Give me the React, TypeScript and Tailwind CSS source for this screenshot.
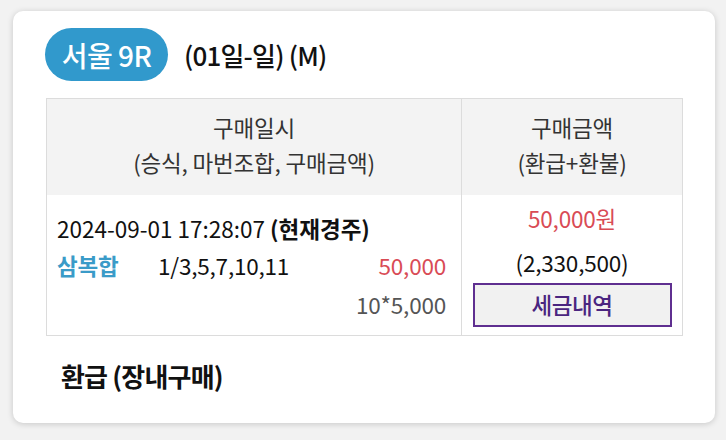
import React from "react";

const font = { fontFamily: '"Noto Sans CJK KR", "Noto Sans", sans-serif' };

export default function App() {
  return (
    <div className="w-[726px] h-[440px] bg-[#f2f2f2] pt-[11px] pl-[13px]" style={font}>
      <div className="w-[702px] h-[412px] bg-white rounded-[10px] shadow-[0_1px_6px_rgba(0,0,0,0.18)] pt-[17px] pl-[32px] pr-[32px]">
        {/* title row */}
        <div className="flex items-center">
          <span className="flex items-center justify-center w-[123px] h-[53px] rounded-full bg-[#3199cc] text-white text-[28px] font-medium tracking-[-0.5px]">
            서울 9R
          </span>
          <span className="ml-[16px] text-[26px] font-medium text-[#111] tracking-[-0.8px]">
            (01일-일) (M)
          </span>
        </div>

        {/* table */}
        <div className="mt-[17px] ml-px w-[637px] border border-[#dcdcdc] grid grid-cols-[415px_1fr] text-[#222] text-[22.5px] tracking-[-0.2px]">
          <div className="h-[96px] bg-[#f3f3f3] border-r border-[#dcdcdc] flex flex-col items-center justify-center leading-[35px] pb-[4px] text-[#333]">
            <span>구매일시</span>
            <span>(승식, 마번조합, 구매금액)</span>
          </div>
          <div className="h-[96px] bg-[#f3f3f3] flex flex-col items-center justify-center leading-[35px] pb-[4px] text-[#333]">
            <span>구매금액</span>
            <span>(환급+환불)</span>
          </div>

          <div className="h-[140px] border-r border-[#dcdcdc] pl-[10px] pr-[15px] pt-[15px] leading-[37px]">
            <div className="text-[#111] tracking-[0px]">
              2024-09-01 17:28:07 <span className="font-bold">(현재경주)</span>
            </div>
            <div className="flex items-center">
              <span className="w-[101px] font-bold text-[#3a9bc8]">삼복합</span>
              <span className="text-[#111]">1/3,5,7,10,11</span>
              <span className="ml-auto text-[#d94b55]">50,000</span>
            </div>
            <div className="text-right text-[#555] mt-[2px]">10*5,000</div>
          </div>
          <div className="h-[140px] flex flex-col items-center pt-[5px]">
            <span className="leading-[37px] text-[#d94b55]">50,000원</span>
            <span className="leading-[37px] mt-[7px] text-[#111]">(2,330,500)</span>
            <button className="mt-[2px] w-[199px] h-[44px] border-2 border-[#5f2f90] bg-[#f1f1f1] text-[#4a2580] text-[22.5px] font-medium tracking-[-0.5px] flex items-center justify-center">
              세금내역
            </button>
          </div>
        </div>

        <div className="mt-[20px] ml-[16px] text-[26px] font-bold text-[#111] tracking-[-0.8px]">
          환급 (장내구매)
        </div>
      </div>
    </div>
  );
}
